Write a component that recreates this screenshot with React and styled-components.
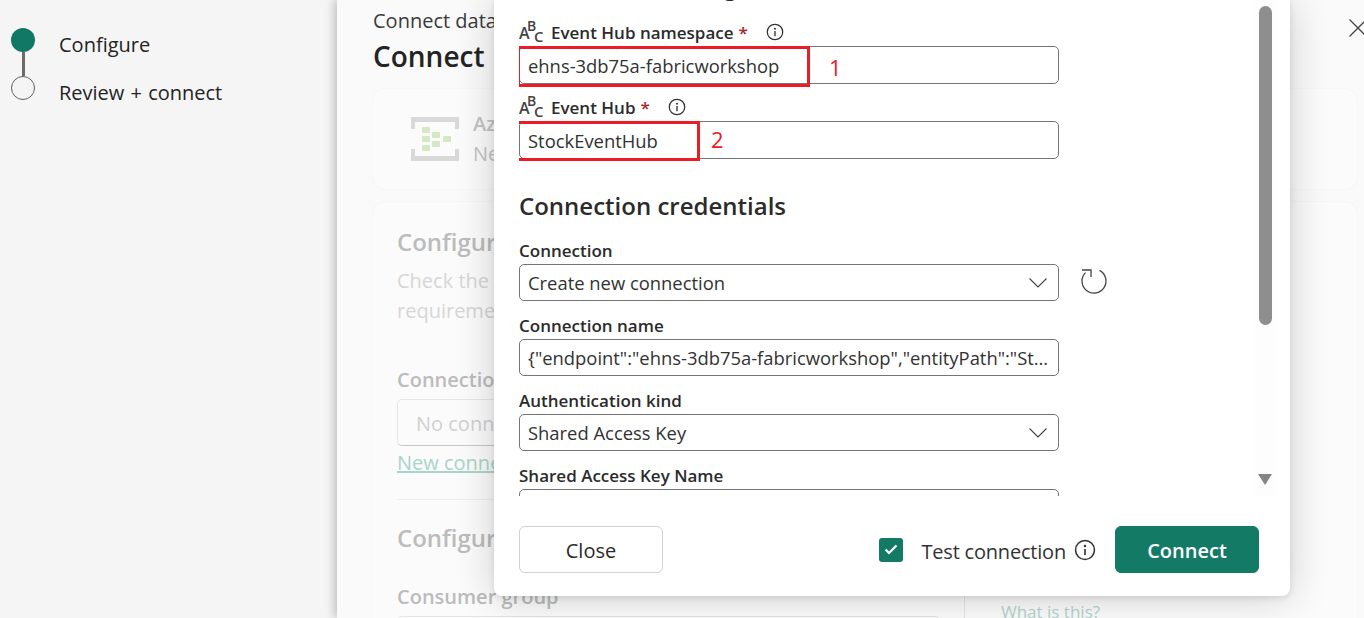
import React from 'react'
import styled, { createGlobalStyle } from 'styled-components'

const GlobalStyle = createGlobalStyle`
  html, body {
    margin: 0;
    height: 100%;
    overflow: hidden;
    background: #f5f5f5;
    font-family: "Open Sans", "Noto Sans", sans-serif;
    color: #242424;
  }
  * { box-sizing: border-box; }
`

const Page = styled.div`
  display: flex;
  width: 1364px;
  height: 618px;
  overflow: hidden;
`

const Sidebar = styled.nav`
  width: 337px;
  flex: none;
  padding: 28px 0 0 11px;
  background: #f5f5f5;
`

const Step = styled.div`
  display: flex;
  gap: 24px;
  height: 48px;
`

const StepMarker = styled.div`
  display: flex;
  flex-direction: column;
  align-items: center;
  width: 24px;
`

const Dot = styled.span`
  flex: none;
  width: 24px;
  height: 24px;
  border-radius: 50%;
  background: ${(p) => (p.$active ? '#117865' : 'transparent')};
  border: ${(p) => (p.$active ? 'none' : '1px solid #616161')};
`

const Line = styled.span`
  width: 3px;
  height: 24px;
  background: #6b6b6b;
`

const StepLabel = styled.span`
  font-size: 20px;
  line-height: 34px;
  word-spacing: 1px;
`

const Panel = styled.main`
  position: relative;
  flex: 1;
  padding: 7px 7px 0 36px;
  background: #fafafa;
  box-shadow: -3px 0 9px rgba(0, 0, 0, 0.22);
`

const Crumb = styled.div`
  font-size: 20px;
  line-height: 27px;
  color: #3a3a3a;
`

const PanelTitle = styled.h1`
  margin: 2px 0 13px;
  font-size: 28px;
  line-height: 40px;
  font-weight: 600;
  color: #242424;
`

const Card = styled.section`
  display: flex;
  background: #fbfbfb;
  border-radius: 12px;
  box-shadow: 0 0 2px rgba(0, 0, 0, 0.06);
`

const SourceCard = styled(Card)`
  align-items: center;
  gap: 14px;
  height: 100px;
  padding-left: 38px;
`

const SourceText = styled.div`
  font-size: 20px;
  line-height: 30px;
  color: #c4c4c4;
`

const SourceName = styled.div`
  font-weight: 600;
`

const ConfigCard = styled(Card)`
  margin-top: 13px;
  height: 460px;
`

const ConfigMain = styled.div`
  width: 592px;
  flex: none;
  padding: 23px 24px;
  border-right: 1px solid #e4e4e4;
`

const ConfigAside = styled.div`
  flex: 1;
  padding: 397px 0 0 36px;
`

const FadedHeading = styled.h2`
  margin: 0;
  font-size: 24px;
  line-height: 34px;
  font-weight: 600;
  color: #bcbcbc;
`

const FadedText = styled.p`
  margin: 7px 0 0;
  font-size: 20px;
  line-height: 30px;
  color: #d6d6d6;
`

const FadedLabel = styled.div`
  margin-top: ${(p) => p.$top || 0}px;
  font-size: 20px;
  line-height: 28px;
  font-weight: 600;
  color: #bcbcbc;
`

const FadedInput = styled.div`
  height: 47px;
  margin-top: 5px;
  padding: 0 18px;
  font-size: 20px;
  line-height: 47px;
  color: #d0d0d0;
  border: 1px solid #e6e6e6;
  border-bottom-color: #c8c8c8;
  border-radius: 5px;
`

const FadedLink = styled.a`
  display: block;
  margin-top: 3px;
  font-size: 20px;
  line-height: 28px;
  color: #a8d5ca;
  text-decoration: underline;
`

const Divider = styled.hr`
  margin: 22px 0 21px;
  border: none;
  border-top: 1px solid #eeeeee;
`

const AsideLink = styled.a`
  font-size: 17px;
  line-height: 26px;
  color: #b4d4cd;
`

const DismissButton = styled.button`
  position: absolute;
  top: 18px;
  right: -4px;
  display: flex;
  width: 20px;
  height: 20px;
  padding: 0;
  background: none;
  border: none;
  color: #444444;
`

const Modal = styled.div`
  position: absolute;
  top: 0;
  left: 157px;
  display: flex;
  flex-direction: column;
  width: 796px;
  height: 596px;
  padding: 0 13px 23px 25px;
  background: #ffffff;
  border-radius: 0 0 8px 8px;
  box-shadow: 0 2px 40px rgba(0, 0, 0, 0.18), 0 2px 6px rgba(0, 0, 0, 0.1);
`

const ScrollArea = styled.div`
  display: flex;
  height: 496px;
  flex: none;
  overflow: hidden;
`

const FormBody = styled.div`
  width: 540px;
  flex: none;
`

const ScrollTrack = styled.div`
  position: relative;
  width: 23px;
  margin-left: 195px;
  background: #fdfdfd;
`

const ScrollThumb = styled.div`
  position: absolute;
  top: 6px;
  left: 5px;
  width: 13px;
  height: 319px;
  background: #8e8e8e;
  border-radius: 7px;
`

const ScrollArrow = styled.div`
  position: absolute;
  top: 474px;
  left: 4px;
  border-left: 7.5px solid transparent;
  border-right: 7.5px solid transparent;
  border-top: 11px solid #858585;
`

const SectionHeading = styled.h2`
  margin: ${(p) => p.$margin};
  font-size: 24px;
  line-height: 32px;
  font-weight: 600;
  color: #2b2b2b;
`

const LabelRow = styled.div`
  display: flex;
  align-items: flex-end;
  height: ${(p) => p.$height || 26}px;
  margin-top: ${(p) => p.$top || 0}px;
  padding-bottom: 2px;
`

const LabelLine = styled.div`
  display: flex;
  align-items: center;
  height: 24px;
  font-size: 17px;
  font-weight: 600;
  color: #2b2b2b;
  white-space: nowrap;
`

const Required = styled.span`
  margin-left: 5px;
  color: #a4262c;
`

const TypeIcon = styled.svg`
  flex: none;
  width: 24px;
  height: 24px;
  margin-right: 8px;
`

const FieldWrap = styled.div`
  position: relative;
`

const Field = styled.div`
  display: flex;
  align-items: center;
  justify-content: space-between;
  height: ${(p) => p.$height}px;
  padding: 0 8px;
  font-size: 18.4px;
  color: #323232;
  border: 1px solid #757575;
  border-radius: 5px;
  white-space: nowrap;
  overflow: hidden;
`

const FieldValue = styled.span`
  overflow: hidden;
  text-overflow: ellipsis;
`

const Highlight = styled.div`
  position: absolute;
  top: 0;
  left: ${(p) => p.$left}px;
  width: ${(p) => p.$width}px;
  height: ${(p) => p.$boxHeight}px;
  border: 3px solid #ed1c24;
`

const Callout = styled.span`
  position: absolute;
  top: ${(p) => p.$top}px;
  left: ${(p) => p.$left}px;
  font-size: 22px;
  font-weight: 500;
  line-height: 28px;
  color: #ed1c24;
`

const RefreshButton = styled.button`
  position: absolute;
  top: 4px;
  left: 562px;
  display: flex;
  width: 28px;
  height: 30px;
  padding: 0;
  background: none;
  border: none;
`

const Footer = styled.footer`
  display: flex;
  align-items: center;
  justify-content: space-between;
  width: 740px;
  margin-top: 30px;
`

const FooterRight = styled.div`
  display: flex;
  align-items: center;
`

const Button = styled.button`
  width: 144px;
  height: 47px;
  padding: 2px 0 0;
  font-family: inherit;
  font-size: 20px;
  font-weight: ${(p) => (p.$primary ? 600 : 500)};
  color: ${(p) => (p.$primary ? '#ffffff' : '#2b2b2b')};
  background: ${(p) => (p.$primary ? '#137a66' : '#ffffff')};
  border: 1px solid ${(p) => (p.$primary ? '#137a66' : '#d1d1d1')};
  border-radius: 6px;
`

const Checkbox = styled.span`
  display: flex;
  align-items: center;
  justify-content: center;
  width: 24px;
  height: 24px;
  margin-right: 18px;
  background: #137a66;
  border-radius: 3px;
`

const CheckLabel = styled.span`
  margin-top: 4px;
  font-size: 20px;
  color: #333333;
  letter-spacing: -0.2px;
`

const InfoWrap = styled.svg`
  flex: none;
  width: ${(p) => p.$size}px;
  height: ${(p) => p.$size}px;
  margin-left: ${(p) => p.$left}px;
  margin-right: ${(p) => p.$right || 0}px;
`

const Info = ({ size = 18, left = 0, right = 0 }) => (
  <InfoWrap $size={size} $left={left} $right={right} viewBox="0 0 20 20" fill="none">
    <circle cx="10" cy="10" r="8.6" stroke="#333" strokeWidth="1.4" />
    <circle cx="10" cy="6.4" r="1.1" fill="#333" />
    <path d="M10 9v5.6" stroke="#333" strokeWidth="1.5" />
  </InfoWrap>
)

const AbcIcon = () => (
  <TypeIcon viewBox="0 0 24 24">
    <text x="0" y="19" fontSize="16" fill="#444" fontFamily="Open Sans">A</text>
    <text x="8" y="11" fontSize="14" fill="#444" fontFamily="Open Sans">B</text>
    <text x="15" y="22" fontSize="15" fill="#444" fontFamily="Open Sans">C</text>
  </TypeIcon>
)

const ChevronIcon = styled.svg`
  flex: none;
  margin-right: 3px;
`

const Chevron = () => (
  <ChevronIcon width="18" height="10" viewBox="0 0 18 10" fill="none">
    <path d="M0.5 0.5 9 9 17.5 0.5" stroke="#444" strokeWidth="1.1" />
  </ChevronIcon>
)

const EventHubsLogo = () => (
  <svg width="48" height="44" viewBox="0 0 48 44" fill="none">
    <path d="M0 12V0h48v12h-4V5H4v7z" fill="#d9d9d9" />
    <path d="M0 32v12h48V32h-4v7H4v-7z" fill="#d9d9d9" />
    <g fill="#d5e8c4">
      <rect x="11" y="10" width="8" height="6" rx="1" />
      <rect x="11" y="19" width="8" height="6" rx="1" />
      <rect x="11" y="28" width="8" height="6" rx="1" />
      <rect x="21" y="15" width="8" height="6" rx="1" />
      <rect x="21" y="24" width="8" height="6" rx="1" />
      <rect x="32" y="19" width="8" height="6" rx="1" />
    </g>
  </svg>
)

const App = () => (
  <Page>
    <GlobalStyle />
    <Sidebar>
      <Step>
        <StepMarker>
          <Dot $active />
          <Line />
        </StepMarker>
        <StepLabel>Configure</StepLabel>
      </Step>
      <Step>
        <StepMarker>
          <Dot />
        </StepMarker>
        <StepLabel>Review + connect</StepLabel>
      </Step>
    </Sidebar>

    <Panel>
      <Crumb>Connect data source</Crumb>
      <PanelTitle>Connect</PanelTitle>
      <SourceCard>
        <EventHubsLogo />
        <SourceText>
          <SourceName>Azure Event Hubs</SourceName>
          <div>New connection</div>
        </SourceText>
      </SourceCard>
      <ConfigCard>
        <ConfigMain>
          <FadedHeading>Configure connection</FadedHeading>
          <FadedText>Check the requirements before you connect. See the requirements page for details.</FadedText>
          <FadedLabel $top={40}>Connection</FadedLabel>
          <FadedInput>No connection</FadedInput>
          <FadedLink>New connection</FadedLink>
          <Divider />
          <FadedHeading>Configure data source</FadedHeading>
          <FadedLabel $top={28}>Consumer group</FadedLabel>
          <FadedInput />
        </ConfigMain>
        <ConfigAside>
          <AsideLink>What is this?</AsideLink>
        </ConfigAside>
      </ConfigCard>
      <DismissButton aria-label="Dismiss">
        <svg width="20" height="20" viewBox="0 0 20 20" fill="none">
          <path d="M1.5 1.5 18.5 18.5M18.5 1.5 1.5 18.5" stroke="#444" strokeWidth="1.3" />
        </svg>
      </DismissButton>

      <Modal>
        <ScrollArea>
          <FormBody>
            <SectionHeading $margin="-30px 0 0">Connection settings</SectionHeading>
            <LabelRow $height={32} $top={12}>
              <LabelLine>
                <AbcIcon />
                Event Hub namespace<Required>*</Required>
                <Info left={18} />
              </LabelLine>
            </LabelRow>
            <FieldWrap>
              <Field $height={38}>ehns-3db75a-fabricworkshop</Field>
              <Highlight $left={-2} $width={293} $boxHeight={41} />
              <Callout $top={7} $left={310}>1</Callout>
            </FieldWrap>
            <LabelRow $height={37}>
              <LabelLine>
                <AbcIcon />
                Event Hub<Required>*</Required>
                <Info left={18} />
              </LabelLine>
            </LabelRow>
            <FieldWrap>
              <Field $height={38}>StockEventHub</Field>
              <Highlight $left={-3} $width={184} $boxHeight={40} />
              <Callout $top={4} $left={192}>2</Callout>
            </FieldWrap>
            <SectionHeading $margin="31px 0 16px">Connection credentials</SectionHeading>
            <LabelRow>
              <LabelLine>Connection</LabelLine>
            </LabelRow>
            <FieldWrap>
              <Field $height={37}>
                Create new connection
                <Chevron />
              </Field>
              <RefreshButton aria-label="Refresh">
                <svg width="26" height="26" viewBox="0 0 26 26" fill="none">
                  <path d="M4.5 4.6A12 12 0 1 0 18.5 2.4" stroke="#444" strokeWidth="1.3" />
                  <path d="M1 2H10V9" stroke="#444" strokeWidth="1.3" />
                </svg>
              </RefreshButton>
            </FieldWrap>
            <LabelRow $height={38}>
              <LabelLine>Connection name</LabelLine>
            </LabelRow>
            <Field $height={37}>
              <FieldValue>{'{"endpoint":"ehns-3db75a-fabricworkshop","entityPath":"StockEventHub"}'}</FieldValue>
            </Field>
            <LabelRow $height={38}>
              <LabelLine>Authentication kind</LabelLine>
            </LabelRow>
            <Field $height={37}>
              Shared Access Key
              <Chevron />
            </Field>
            <LabelRow $height={38}>
              <LabelLine>Shared Access Key Name</LabelLine>
            </LabelRow>
            <Field $height={37} />
          </FormBody>
          <ScrollTrack>
            <ScrollThumb />
            <ScrollArrow />
          </ScrollTrack>
        </ScrollArea>
        <Footer>
          <Button>Close</Button>
          <FooterRight>
            <Checkbox>
              <svg width="14" height="11" viewBox="0 0 14 11" fill="none">
                <path d="M1.5 5.5 5 9 12.5 1.5" stroke="#fff" strokeWidth="2.2" />
              </svg>
            </Checkbox>
            <CheckLabel>Test connection</CheckLabel>
            <Info size={22} left={8} right={19} />
            <Button $primary>Connect</Button>
          </FooterRight>
        </Footer>
      </Modal>
    </Panel>
  </Page>
)

export default App
